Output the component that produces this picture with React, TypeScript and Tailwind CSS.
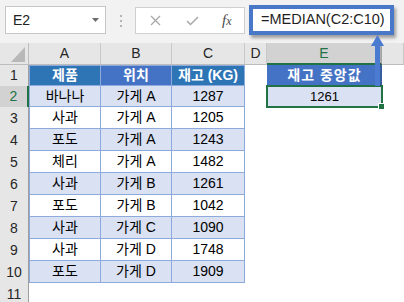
const rows = [
  ["바나나", "가게 A", "1287"],
  ["사과", "가게 A", "1205"],
  ["포도", "가게 A", "1243"],
  ["체리", "가게 A", "1482"],
  ["사과", "가게 B", "1261"],
  ["포도", "가게 B", "1042"],
  ["사과", "가게 C", "1090"],
  ["사과", "가게 D", "1748"],
  ["포도", "가게 D", "1909"],
];

const kr = "font-['Liberation_Sans','Noto_Sans_CJK_KR',sans-serif]";

function ColHead({ label, selected }: { label: string; selected?: boolean }) {
  return (
    <div
      className={`flex items-center justify-center border-r border-[#c8c8c8] text-[14px] ${
        selected
          ? "bg-[#d2d2d2] text-[#217346] border-b-2 border-b-[#217346]"
          : "bg-[#e6e6e6] text-[#262626] border-b border-b-[#bdbdbd]"
      }`}
    >
      {label}
    </div>
  );
}

function RowHead({ n, selected }: { n: number; selected?: boolean }) {
  return (
    <div
      className={`flex items-center justify-center text-[14px] ${
        selected
          ? "bg-[#d2d2d2] text-[#217346] border-r-2 border-[#217346]"
          : "bg-[#e6e6e6] text-[#262626] border-r border-[#9e9e9e]"
      }`}
    >
      {n}
    </div>
  );
}

export default function App() {
  return (
    <div className={`relative w-[404px] h-[302px] overflow-hidden bg-white ${kr}`}>
      {/* toolbar */}
      <div className="flex items-start h-[43px] bg-[#f2f2f2]">
        <div className="mt-[6px] ml-[5px] flex items-center w-[101px] h-[28px] bg-white border border-[#c6c6c6] pl-[7px] pr-[6px]">
          <span className="text-[14px] text-[#222]">E2</span>
          <svg className="ml-auto" width="7" height="4" viewBox="0 0 7 4">
            <polygon points="0,0 7,0 3.5,4" fill="#6b6b6b" />
          </svg>
        </div>
        <div className="mt-[15px] ml-[14px] flex flex-col gap-[3px]">
          <span className="w-[2px] h-[2px] bg-[#b4b4b4]" />
          <span className="w-[2px] h-[2px] bg-[#b4b4b4]" />
          <span className="w-[2px] h-[2px] bg-[#b4b4b4]" />
        </div>
        <div className="mt-[7px] ml-[13px] flex items-center w-[110px] h-[27px] bg-white border border-[#d0d0d0]">
          <svg className="ml-[14px]" width="11" height="11" viewBox="0 0 11 11">
            <path d="M1 1 L10 10 M10 1 L1 10" stroke="#a8a8a8" strokeWidth="1.3" fill="none" />
          </svg>
          <svg className="ml-[25px]" width="13" height="10" viewBox="0 0 13 10">
            <path d="M1 5 L4.5 8.5 L12 1" stroke="#a8a8a8" strokeWidth="1.5" fill="none" />
          </svg>
          <span className="ml-[23px] font-['Liberation_Serif',serif] italic text-[15px] text-[#4a4a4a] leading-none">
            f<span className="text-[12px]">x</span>
          </span>
        </div>
        <div className="mt-[5px] ml-[4px] flex items-center w-[145px] h-[30px] bg-white border-4 border-[#4a78c8] shadow-[2px_3px_3px_rgba(0,0,0,0.35)] pl-[8px]">
          <span className="font-['Liberation_Sans',sans-serif] text-[14.5px] text-[#1f1f1f]">=MEDIAN(C2:C10)</span>
        </div>
      </div>

      {/* sheet */}
      <div className="grid grid-cols-[29px_72px_71px_73px_22px_115px_1fr] grid-rows-[22px_21px_21px_repeat(9,22px)]">
        <div className="relative bg-[#e6e6e6] border-r border-b border-[#bdbdbd]">
          <svg className="absolute right-[3px] bottom-[2px]" width="14" height="15" viewBox="0 0 14 15">
            <polygon points="14,0 14,15 0,15" fill="#b8b8b8" />
          </svg>
        </div>
        <ColHead label="A" />
        <ColHead label="B" />
        <ColHead label="C" />
        <ColHead label="D" />
        <ColHead label="E" selected />
        <ColHead label="" />

        {/* row 1 */}
        <RowHead n={1} />
        <div className="flex items-center justify-center bg-[#2e75b6] border border-[#8ea9db] text-white font-bold text-[14px]">제품</div>
        <div className="flex items-center justify-center bg-[#4472c4] border-y border-r border-[#8ea9db] text-white font-bold text-[14px]">위치</div>
        <div className="flex items-center justify-center bg-[#2e75b6] border-y border-r border-[#8ea9db] text-white font-bold text-[14px]">재고 (KG)</div>
        <div />
        <div className="flex items-center justify-center bg-[#4472c4] text-white font-bold text-[14px] tracking-[1px]">재고 중앙값</div>
        <div />

        {rows.map((r, i) => {
          const n = i + 2;
          const fill = n % 2 === 0 ? "bg-[#d9e1f2]" : "bg-white";
          const cell = `flex items-center justify-center border-b border-r border-[#8ea9db] text-[14px] text-black ${fill}`;
          return [
            <RowHead key={`h${n}`} n={n} selected={n === 2} />,
            <div key={`a${n}`} className={`${cell} border-l`}>{r[0]}</div>,
            <div key={`b${n}`} className={cell}>{r[1]}</div>,
            <div key={`c${n}`} className={`${cell} text-[13px]`}>{r[2]}</div>,
            <div key={`d${n}`} />,
            n === 2 ? (
              <div key={`e${n}`} className="relative flex items-center justify-center bg-[#d9e1f2] text-[13px] text-black">
                1261
                <div className="absolute -inset-[1px] border-2 border-[#217346]" />
                <div className="absolute -right-[3px] -bottom-[3px] w-[7px] h-[7px] bg-[#217346] border border-white" />
              </div>
            ) : (
              <div key={`e${n}`} />
            ),
            <div key={`f${n}`} />,
          ];
        })}

        <RowHead n={11} />
        <div />
        <div />
        <div />
        <div />
        <div />
        <div />
      </div>

      {/* callout arrow */}
      <svg className="absolute left-0 top-0 pointer-events-none" width="404" height="302" viewBox="0 0 404 302">
        <rect x="380" y="46" width="2" height="40" fill="rgba(0,0,0,0.18)" />
        <rect x="375" y="44" width="5" height="42" fill="#4a7bd0" />
        <polygon points="377.5,35 384,46 371,46" fill="#4a7bd0" />
      </svg>
    </div>
  );
}
